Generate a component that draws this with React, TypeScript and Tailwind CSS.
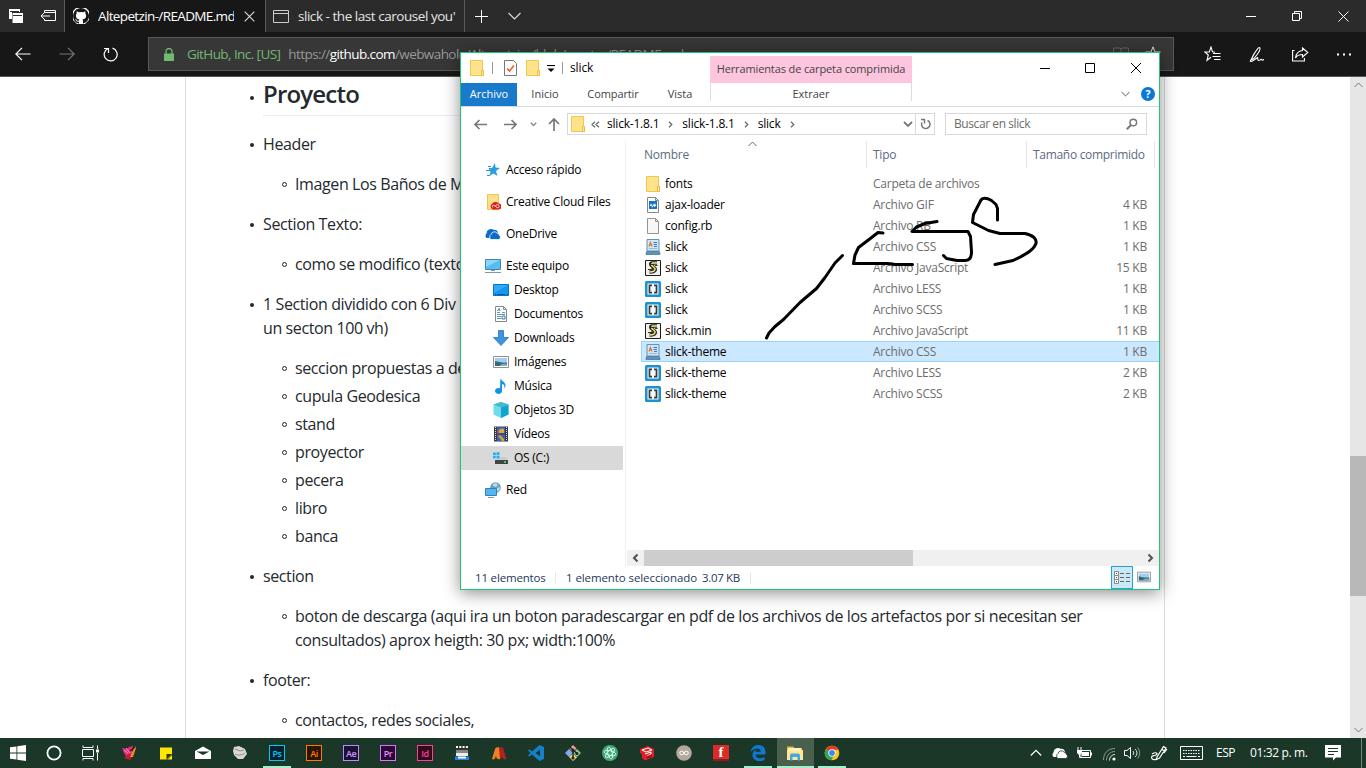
import React from "react";

type SvgProps = { w?: number; h?: number; vb?: string; className?: string; children: React.ReactNode };

function Svg({ w = 16, h = 16, vb, className = "", children }: SvgProps) {
  return (
    <svg width={w} height={h} viewBox={vb ?? `0 0 ${w} ${h}`} fill="none" className={`shrink-0 ${className}`}>
      {children}
    </svg>
  );
}

/* ---------- browser ---------- */

function TabBar() {
  return (
    <div className="flex h-8 shrink-0 bg-[#2b2b2b] text-[13.5px] text-white">
      <div className="flex w-16 items-center gap-[17px] pl-[9px]">
        <Svg w={14} h={14}>
          <path d="M0 0H11V3H3V10H0Z" fill="#fff" />
          <path d="M1 2.5H10" stroke="#2b2b2b" />
          <path d="M3.5 4H14V14H3.5Z" fill="#fff" />
          <path d="M4 6.5H13" stroke="#2b2b2b" />
        </Svg>
        <Svg w={16} h={12}>
          <path d="M4.5 3V.5H15.5V10.5H4.5V9M4.5 2.5H15M10 6H1M4 3L1 6L4 9" stroke="#fff" />
        </Svg>
      </div>
      <div className="flex w-[201px] items-center border-l border-[#5a5a5a] bg-[#171717] pl-2">
        <Svg>
          <rect width="16" height="16" fill="#fff" />
          <path
            fill="#171717"
            d="M8 0C3.6 0 .1 3.6.1 8c0 3.500 2.300 6.500 5.400 7.600.4.100.5-.2.5-.4v-1.500c-2.200.5-2.700-.9-2.700-.9-.4-.9-.9-1.200-.9-1.200-.7-.5.1-.5.1-.5.8.1 1.200.8 1.200.8.7 1.200 1.900.9 2.300.7.1-.5.3-.9.5-1.100-1.800-.2-3.600-.9-3.600-3.900 0-.9.3-1.600.8-2.100-.1-.2-.4-1 .1-2.100 0 0 .7-.2 2.200.8a7.500 7.500 0 0 1 4 0c1.500-1 2.200-.8 2.200-.8.4 1.100.2 1.900.1 2.100.5.6.8 1.300.8 2.100 0 3.100-1.900 3.700-3.700 3.900.3.300.6.8.6 1.500v2.200c0 .2.100.5.5.4A8 8 0 0 0 8 0Z"
          />
          <path fill="#171717" d="M0 0H3L0 3ZM16 0V3L13 0ZM0 16V12L4 16ZM16 16H12L16 12Z" />
        </Svg>
        <div className="ml-[9px] w-[136px] overflow-hidden whitespace-nowrap tracking-[-0.047em]">Altepetzin-/README.md</div>
        <Svg w={11} h={11} className="ml-[10px]">
          <path d="M.7.7L10.300 10.300M10.300.7L.7 10.300" stroke="#ddd" strokeWidth="1.100" />
        </Svg>
      </div>
      <div className="flex w-[200px] items-center border-x border-[#5a5a5a] pl-[7px] text-[#e6e6e6]">
        <Svg w={16} h={13}>
          <path d="M.5.5H15.500V12.500H.5ZM.5 3.500H15.500" stroke="#ccc" />
        </Svg>
        <div className="ml-[9px] w-[160px] overflow-hidden whitespace-nowrap tracking-[-0.034em]">slick - the last carousel you'</div>
      </div>
      <div className="flex flex-1 items-center pl-[10px]">
        <Svg w={13} h={13}>
          <path d="M0 6.500H13M6.500 0V13" stroke="#fff" />
        </Svg>
        <Svg w={13} h={8} className="ml-5">
          <path d="M.5 1L6.500 7L12.500 1" stroke="#ddd" strokeWidth="1.100" />
        </Svg>
      </div>
      <div className="flex w-[138px] items-center">
        <div className="flex w-[46px] justify-center">
          <Svg w={10} h={10}><path d="M0 5.500H10" stroke="#fff" /></Svg>
        </div>
        <div className="flex w-[46px] justify-center">
          <Svg w={10} h={10}><path d="M.5 2.500H7.500V9.500H.5ZM2.500 2V.5H9.500V7.500H8" stroke="#fff" /></Svg>
        </div>
        <div className="flex w-[46px] justify-center">
          <Svg w={11} h={11}><path d="M.5.5L10.500 10.500M10.500.5L.5 10.500" stroke="#fff" /></Svg>
        </div>
      </div>
    </div>
  );
}

function NavBar() {
  return (
    <div className="flex h-[45px] shrink-0 items-start border-b border-[#5b5558] bg-[#171717] text-[13.5px]">
      <div className="flex h-[44px] w-[148px] items-center pl-[15px]">
        <Svg w={16} h={14}>
          <path d="M.8 7H15.500M7 .8L.8 7L7 13.200" stroke="#fff" strokeWidth="1.200" />
        </Svg>
        <Svg w={16} h={14} className="ml-7">
          <path d="M.5 7H15.200M9 .8L15.200 7L9 13.200" stroke="#777" strokeWidth="1.100" />
        </Svg>
        <Svg w={16} h={15} className="ml-7">
          <path d="M5 1.500A6.500 6.500 0 1 0 9.500 1.200M1 1.500H5.500V6" stroke="#fff" strokeWidth="1.200" />
        </Svg>
      </div>
      <div className="mt-[5px] flex h-[34px] w-[1026px] items-center border border-[#595959] bg-[#373737] pl-[15px] whitespace-nowrap">
        <Svg w={10} h={13}>
          <path d="M0 5.500H10V13H0Z" fill="#72b972" />
          <path d="M2 6V3.500A3 3 0 0 1 8 3.500V6" stroke="#72b972" strokeWidth="1.300" />
        </Svg>
        <span className="ml-[13px] tracking-[-0.043em] text-[#72b972]">GitHub, Inc. [US]</span>
        <span className="ml-[8px] tracking-[-0.043em] text-[#999]">
          https://<span className="text-white">github.com</span>/webwahole/Altepetzin-/blob/master/README.md
        </span>
        <Svg w={16} h={14} className="ml-auto">
          <path d="M.5 1H7L8 2L9 1H15.500V13H.5ZM8 2V13" stroke="#666" />
        </Svg>
        <Svg w={16} h={16} className="mr-3 ml-4">
          <path d="M8 .8L10 6H15.300L11 9.500L12.500 15L8 11.500L3.500 15L5 9.500L.7 6H6Z" stroke="#ddd" />
        </Svg>
      </div>
      <div className="flex h-[44px] flex-1 items-center pl-[30px]">
        <Svg w={17} h={16}>
          <path d="M11 6.300L8.500 5.800L7 1L5.300 6H.8L4.300 9L3 14.300L7 11.200" stroke="#fff" strokeWidth="1.100" />
          <path d="M9 7.500H16.500M8.500 10.500H16.500M10 13.500H16.500" stroke="#fff" />
        </Svg>
        <Svg w={16} h={17} className="ml-7">
          <path d="M1 15.500C5 9 8 1 10.500 1.500C13 3 6 12 3.500 13.500C1.500 14 4.500 8 8.500 3M1.500 15.500C4 15.500 7 12.500 8.500 11.500C9.500 12 8 14 9.500 14.500C11 14.500 11.500 13 12.500 13.500C13 14.500 14 14 15 13.500" stroke="#fff" strokeWidth="1.100" />
        </Svg>
        <Svg w={17} h={15} className="ml-[27px]">
          <path d="M2.500 3.500H.6V14H12.400V11" stroke="#fff" strokeWidth="1.100" />
          <path d="M10.500 1L15.800 5.500L10.500 10V7.500C7 7.500 5 8.500 3.500 11C4 6.500 6.500 4 10.500 3.500Z" stroke="#fff" strokeWidth="1.100" />
        </Svg>
        <Svg w={15} h={3} className="ml-7">
          <path d="M0 .5H2V2.500H0ZM6 .5H8V2.500H6ZM12 .5H14V2.500H12Z" fill="#fff" />
        </Svg>
      </div>
    </div>
  );
}

const outline: { text: string; sub?: boolean; tight?: boolean; more?: string }[] = [
  { text: "Header" },
  { text: "Imagen Los Baños de M", sub: true },
  { text: "Section Texto:" },
  { text: "como se modifico (texto", sub: true },
  { text: "1 Section dividido con 6 Div", more: "un secton 100 vh)" },
  { text: "seccion propuestas a de", sub: true },
  { text: "cupula Geodesica", sub: true, tight: true },
  { text: "stand", sub: true, tight: true },
  { text: "proyector", sub: true, tight: true },
  { text: "pecera", sub: true, tight: true },
  { text: "libro", sub: true, tight: true },
  { text: "banca", sub: true, tight: true },
  { text: "section" },
  {
    text: "boton de descarga (aqui ira un boton paradescargar en pdf de los archivos de los artefactos por si necesitan ser",
    sub: true,
    more: "consultados) aprox heigth: 30 px; width:100%",
  },
  { text: "footer:" },
  { text: "contactos, redes sociales,", sub: true },
];

function ReadmePage() {
  return (
    <div className="flex min-h-0 flex-1 overflow-hidden bg-white">
      <div className="ml-[185px] w-[980px] border-x border-[#ddd] pl-[63px] text-base tracking-[-0.0245em] text-[#24292e]">
        <div className="flex">
          <span className="mt-[19px] mr-[9px] ml-[1px] h-1 w-1 rounded-full bg-[#24292e]" />
          <h2 className="h-[39px] w-[852px] border-b border-[#eaecef] text-2xl leading-[34px] font-semibold tracking-[-0.034em]">Proyecto</h2>
        </div>
        {outline.map((o) => (
          <div key={o.text} className={`flex whitespace-nowrap ${o.tight ? "mt-1" : "mt-4"} ${o.sub ? "pl-8" : ""}`}>
            {o.sub ? (
              <span className="mt-[10px] mr-[8px] ml-[1px] h-[5px] w-[5px] shrink-0 rounded-full border border-[#24292e]" />
            ) : (
              <span className="mt-[11px] mr-[9px] ml-[1px] h-1 w-1 shrink-0 rounded-full bg-[#24292e]" />
            )}
            <div className="leading-6">
              <div>{o.text}</div>
              {o.more && <div>{o.more}</div>}
            </div>
          </div>
        ))}
      </div>
      <div className="ml-auto flex w-4 flex-col items-center bg-[#e6e6e6]">
        <Svg w={9} h={6} className="mt-[5px]"><path d="M.5 5L4.500 1L8.500 5" stroke="#777" /></Svg>
        <div className="mt-[368px] h-[140px] w-4 bg-[#b8b8b8]" />
        <Svg w={9} h={6} className="mt-auto mb-[5px]"><path d="M.5 1L4.500 5L8.500 1" stroke="#777" /></Svg>
      </div>
    </div>
  );
}

/* ---------- explorer icons ---------- */

const Folder = ({ className = "" }: { className?: string }) => (
  <Svg w={14} h={16} className={className}>
    <path d="M.5.5H12.500V10L13.500 11V15.500H.5Z" fill="#ffe28c" stroke="#f0c850" />
    <path d="M11.500 10.500H13.500V15.500H11.500Z" fill="#ffe9a8" stroke="#e8bd45" />
  </Svg>
);

const StarIcon = () => (
  <Svg>
    <path d="M10 1L10.500 5.500L15 6L11 9L12.500 14L8.500 11.500L4.500 14L5.500 10L3.500 6L7 6Z" fill="#2a9fe0" />
    <path d="M3 4.500H6M1 8.500H5M2 13.500H5" stroke="#2f93cf" />
  </Svg>
);
const CloudFiles = () => (
  <Svg>
    <path d="M2.500.5H13.500V15.500H2.500Z" fill="#ffe08a" stroke="#edc552" />
    <path d="M8 15.500A3 3 0 0 1 7 10A4 4 0 0 1 13.500 9.500A3 3 0 0 1 13.500 15.500Z" fill="#da1f1a" />
    <path d="M8 13.500C6.500 12 8 10.500 9.500 11.500L12 13.500C14 14.500 15 12 13.500 11C12 10 10.500 11.500 10 12.500" stroke="#fff" strokeWidth=".8" />
  </Svg>
);
const OneDrive = ({ color = "#0b6cc9", gap = "#fff" }: { color?: string; gap?: string }) => (
  <Svg>
    <path d="M1.500 12A3 3 0 0 1 1.500 7.500A4.500 4.500 0 0 1 8.500 3.800A4 4 0 0 1 13 7L8 12Z" fill={color} />
    <path d="M6 13.500A3 3 0 0 1 6 8.500A3.500 3.500 0 0 1 12 7A3.200 3.200 0 0 1 14.500 9.500A2.300 2.300 0 0 1 14 13.500Z" fill={color} stroke={gap} strokeWidth=".8" />
  </Svg>
);
const Computer = () => (
  <Svg>
    <path d="M.5 1.500H15.500V11.500H.5Z" fill="#54bef3" stroke="#4684a8" />
    <path d="M1 2H15L1 9Z" fill="#8bd6fa" />
    <path d="M6 12.500H10M0 14.500H16" stroke="#8197a5" />
  </Svg>
);
const DesktopIcon = () => (
  <Svg>
    <path d="M.5 2.500H15.500V13.500H.5Z" fill="#1197f1" stroke="#0873c0" />
    <path d="M1 3H15L1 11Z" fill="#30aafa" />
    <path d="M2 12.500H3M4 12.500H12M14 12.500H15" stroke="#0a4f86" />
  </Svg>
);
const DocIcon = () => (
  <Svg>
    <path d="M2.500.5H10.500L13.500 3.500V15.500H2.500Z" fill="#fff" stroke="#8a8a8a" />
    <path d="M10.500.5V3.500H13.500" stroke="#8a8a8a" />
    <path d="M4 6.500H7M9 6.500H12M4 8.500H12M4 10.500H8M4 12.500H8" stroke="#5f9bc4" />
    <path d="M4.500 5L6 2.500L7 5M9 10H12V13H9Z" stroke="#3a7fb2" />
  </Svg>
);
const DownIcon = () => (
  <Svg><path d="M5.500.5H10.500V7.500H15.500L8 15.500L.5 7.500H5.500Z" fill="#3d96dd" stroke="#2476bd" strokeWidth=".8" /></Svg>
);
const PicIcon = ({ w = 16 }: { w?: number }) => (
  <Svg w={w} h={w} vb="0 0 16 16">
    <path d="M.5 2.500H15.500V13.500H.5Z" fill="#fff" stroke="#8e8e8e" />
    <path d="M2 4H14V12H2Z" fill="#9fcdf3" />
    <path d="M2 7C5 8 10 9 14 8.500V12H2Z" fill="#356a72" />
    <path d="M7 11C9 10 12 9.500 14 10V12H7Z" fill="#7eaec2" />
  </Svg>
);
const MusicIcon = () => (
  <Svg>
    <path d="M7.500 0C8 3 13 4 12.500 8C12 9.500 11.500 10 11 10.500C12 7.500 11 6.500 9 6V12.500A3.500 3 0 1 1 7 10.200Z" fill="#1094e8" />
  </Svg>
);
const CubeIcon = () => (
  <Svg>
    <path d="M8 0L15.500 2.500V12.500L8 16L.5 12.500V2.500Z" fill="#6fdcec" />
    <path d="M8 0L15.500 2.500L8 5.500L.5 2.500Z" fill="#47b9cc" />
    <path d="M8 5.500L15.500 2.500V12.500L8 16Z" fill="#12a3d0" />
  </Svg>
);
const FilmIcon = () => (
  <Svg>
    <path d="M1 .5H15V15.500H1Z" fill="#3b3b3b" />
    <path d="M2.500 1V15M13.500 1V15" stroke="#ddd" strokeDasharray="1 1" />
    <path d="M4 1H12V7.500H4ZM4 8.500H12V15H4Z" fill="#3562c4" />
    <path d="M5 5L8 2.500L11 3V7H6Z" fill="#e0aa38" />
    <path d="M5 10L7 9L11 13V15H9Z" fill="#dca22c" />
    <path d="M4 5H6V7.500H4Z" fill="#c04677" />
  </Svg>
);
const DriveIcon = () => (
  <Svg>
    <path d="M0 2.500H2.800V5H0ZM3.500 2.200H6.500V5H3.500ZM0 5.800H2.800V8.300H0ZM3.500 5.800H6.500V8.500H3.500Z" fill="#19b5f1" />
    <path d="M7 7H13L14.500 10H2L3 9H7Z" fill="#cacaca" />
    <path d="M2 10H15V14H2Z" fill="#444" />
    <path d="M11 12H13" stroke="#3f4" strokeWidth="1.500" />
  </Svg>
);
const NetIcon = () => (
  <Svg>
    <circle cx="10.500" cy="5.500" r="5.300" fill="#6d9eb8" />
    <path d="M8 2L11 1L13 3L11 5L8 4ZM12 6L15 5L14 9L12 9Z" fill="#b9dceb" />
    <path d="M.5 6.500H11.500V13.500H.5Z" fill="#4fb8f2" stroke="#3581b5" />
    <path d="M3 15.500H9" stroke="#7f97a5" />
  </Svg>
);

const GifFile = () => (
  <Svg>
    <path d="M2.500.5H10.500L13.500 3.500V15.500H2.500Z" fill="#fff" stroke="#888" />
    <path d="M10.500.5V3.500H13.500" stroke="#888" />
    <path d="M4 4H12V12H4Z" fill="#1174c8" />
    <path d="M5 5V8L6 6.500L7.500 9L9 6.500L10.500 8L11 5.500V8.500L9.500 10L8.500 8.500L7.500 10.500L6 8.500L5 9Z" fill="#fff" />
  </Svg>
);
const BlankFile = () => (
  <Svg>
    <path d="M2.500.5H10.500L13.500 3.500V15.500H2.500Z" fill="#f7f7f7" stroke="#949494" />
    <path d="M10.500.5V3.500H13.500" stroke="#949494" />
  </Svg>
);
const CssFile = () => (
  <Svg>
    <path d="M2 .5H14V13H2Z" fill="#cfe6f7" stroke="#5e93ba" />
    <path d="M2.500 12H13.500L15 14V15.500H1V14Z" fill="#5f93bb" stroke="#3f7097" strokeWidth=".7" />
    <path d="M4 7.500L5.500 3.500L7 7.500M4.500 6H6.500" stroke="#e0762c" strokeWidth="1.200" />
    <path d="M8.500 3.500H12M8.500 5.500H12M9 7.500H12" stroke="#3a78d0" />
    <path d="M4 9.500H12" stroke="#9fb9cc" />
  </Svg>
);
const JsFile = () => (
  <Svg>
    <path d="M.5.500H15.500V15.500H.5Z" fill="#f0f0ec" stroke="#1c1c1c" />
    <path d="M12 3H7C5 3.500 5.500 5.500 7.500 6.500L10 8.500C11 10.500 9 12 4.500 12" stroke="#222" strokeWidth="3.400" />
    <path d="M12 3H7.500C6 4 6.500 5.500 8 6.500L10 8.500C10.500 11 8.500 12 4.500 12" stroke="#f3eb7d" strokeWidth="1.500" />
    <path d="M10 5.500H12.500M6.500 8.500H9M3 9.500H8M6 4.500H9" stroke="#333" />
  </Svg>
);
const BracketFile = () => (
  <Svg>
    <rect width="16" height="16" rx="1.500" fill="#1c92d2" />
    <path d="M2.500 2.500H13.500V13.500H2.500Z" fill="#f5f8fa" />
    <path d="M7 4.300H4.500V11.700H7M9 4.300H11.500V11.700H9" stroke="#3a3a3a" strokeWidth="1.700" />
  </Svg>
);

/* ---------- explorer window ---------- */

function TitleAndRibbon() {
  return (
    <div className="flex h-[54px] shrink-0 border-b border-[#d9dadb] text-[11px] whitespace-nowrap">
      <div className="flex w-[249px] flex-col">
        <div className="flex h-[30px] items-center pl-[10px] text-xs">
          <Folder className="-ml-px" />
          <div className="ml-[8px] h-3 w-px bg-[#999]" />
          <Svg w={13} h={16} className="ml-[11px]">
            <path d="M.5.500H9.500L12.500 3.500V15.500H.5Z" fill="#fff" stroke="#777" />
            <path d="M3 8.500L5.500 11L10 5.500" stroke="#e8622c" strokeWidth="1.600" />
          </Svg>
          <Folder className="ml-[9px]" />
          <Svg w={8} h={8} className="mt-[2px] ml-[7px]"><path d="M0 .5H8" stroke="#000" strokeWidth="1.200" /><path d="M.5 3.500H7.500L4 7Z" fill="#000" /></Svg>
          <div className="ml-[7px] h-3 w-px bg-[#999]" />
          <span className="ml-[7px] tracking-[-0.01em] text-black">slick</span>
        </div>
        <div className="flex h-[23px] items-center text-[#444]">
          <div className="flex h-[23px] w-14 items-center justify-center bg-[#1979ca] text-white">Archivo</div>
          <div className="flex w-[56px] justify-center">Inicio</div>
          <div className="flex w-[80px] justify-center tracking-[-0.01em]">Compartir</div>
          <div className="flex w-[54px] justify-center">Vista</div>
        </div>
      </div>
      <div className="flex w-[202px] flex-col pt-[3px] text-[#444]">
        <div className="flex h-[27px] items-center justify-center bg-[#fdc5de] tracking-[-0.011em]">Herramientas de carpeta comprimida</div>
        <div className="flex h-[18px] items-center justify-center border-x border-[#ddd] pt-[5px]">Extraer</div>
      </div>
      <div className="flex flex-1 flex-col">
        <div className="flex h-[30px] items-center justify-end">
          <div className="flex w-[46px] justify-center"><Svg w={10} h={10}><path d="M0 5.500H10" stroke="#000" /></Svg></div>
          <div className="flex w-[45px] justify-center"><Svg w={10} h={10} className="-ml-px"><path d="M.5.5H9.500V9.500H.5Z" stroke="#000" /></Svg></div>
          <div className="flex w-[46px] justify-center"><Svg w={10} h={10}><path d="M0 0L10 10M10 0L0 10" stroke="#000" /></Svg></div>
        </div>
        <div className="flex h-[22px] items-center justify-end gap-[11px] pr-1">
          <Svg w={9} h={6}><path d="M.5.800L4.500 4.800L8.500.8" stroke="#999" strokeWidth="1.200" /></Svg>
          <div className="flex h-[14px] w-[14px] items-center justify-center rounded-full bg-[#0b78d8] text-[10.5px] font-bold text-white">?</div>
        </div>
      </div>
    </div>
  );
}

const Crumb = () => (
  <Svg w={5} h={7} className="mx-[9px]"><path d="M1 .8L3.800 3.500L1 6.200" stroke="#666" strokeWidth="1.200" /></Svg>
);

function AddressRow() {
  return (
    <div className="flex h-[34px] shrink-0 items-center pl-[13px] text-xs whitespace-nowrap">
      <Svg w={13} h={11}><path d="M1 5.500H13M5.500 1L1 5.500L5.500 10" stroke="#777" strokeWidth="1.600" /></Svg>
      <Svg w={13} h={11} className="ml-[17px]"><path d="M0 5.500H12M7.500 1L12 5.500L7.500 10" stroke="#777" strokeWidth="1.600" /></Svg>
      <Svg w={7} h={5} className="ml-[13px]"><path d="M.8.8L3.500 3.500L6.200.8" stroke="#888" strokeWidth="1.400" /></Svg>
      <Svg w={12} h={13} className="ml-[11px]"><path d="M6 13V1M1 6L6 1L11 6" stroke="#777" strokeWidth="1.700" /></Svg>
      <div className="ml-[7px] flex h-[22px] w-[368px] items-center border border-[#d9d9d9] pl-[3px] tracking-[-0.017em] text-black">
        <Folder />
        <Svg w={9} h={7} className="mx-[6px]"><path d="M4 .8L1 3.500L4 6.200M8 .8L5 3.500L8 6.200" stroke="#666" strokeWidth="1.200" /></Svg>
        <span className="ml-[1px]">slick-1.8.1</span>
        <Crumb />
        <span>slick-1.8.1</span>
        <Crumb />
        <span>slick</span>
        <Crumb />
        <Svg w={10} h={7} className="mr-[2px] ml-auto"><path d="M1 1L5 5L9 1" stroke="#777" strokeWidth="1.800" /></Svg>
        <div className="flex h-[20px] w-[19px] items-center justify-center border-l border-[#d9d9d9]">
          <Svg w={11} h={12}><path d="M7.500 2.500A4.200 4.200 0 1 1 2 4.500M1 1.500H4.500V5.500" stroke="#777" strokeWidth="1.500" /></Svg>
        </div>
      </div>
      <div className="ml-[10px] flex h-[22px] w-[202px] items-center justify-between border border-[#d9d9d9] pr-2 pl-2 text-[#6d6d6d]">
        <span className="tracking-[-0.035em]">Buscar en slick</span>
        <Svg w={12} h={12}><circle cx="7.300" cy="4.500" r="3.300" stroke="#777" strokeWidth="1.500" /><path d="M5 7L.8 11.200" stroke="#777" strokeWidth="2" /></Svg>
      </div>
    </div>
  );
}

const places: { label: string; icon: React.ReactNode; sub?: boolean; gap?: boolean; active?: boolean }[] = [
  { label: "Acceso rápido", icon: <StarIcon /> },
  { label: "Creative Cloud Files", icon: <CloudFiles />, gap: true },
  { label: "OneDrive", icon: <OneDrive />, gap: true },
  { label: "Este equipo", icon: <Computer />, gap: true },
  { label: "Desktop", icon: <DesktopIcon />, sub: true },
  { label: "Documentos", icon: <DocIcon />, sub: true },
  { label: "Downloads", icon: <DownIcon />, sub: true },
  { label: "Imágenes", icon: <PicIcon />, sub: true },
  { label: "Música", icon: <MusicIcon />, sub: true },
  { label: "Objetos 3D", icon: <CubeIcon />, sub: true },
  { label: "Vídeos", icon: <FilmIcon />, sub: true },
  { label: "OS (C:)", icon: <DriveIcon />, sub: true, active: true },
  { label: "Red", icon: <NetIcon />, gap: true },
];

const files: { name: string; type: string; size: string; icon: React.ReactNode; selected?: boolean }[] = [
  { name: "fonts", type: "Carpeta de archivos", size: "", icon: <Folder className="mx-[1px]" /> },
  { name: "ajax-loader", type: "Archivo GIF", size: "4 KB", icon: <GifFile /> },
  { name: "config.rb", type: "Archivo RB", size: "1 KB", icon: <BlankFile /> },
  { name: "slick", type: "Archivo CSS", size: "1 KB", icon: <CssFile /> },
  { name: "slick", type: "Archivo JavaScript", size: "15 KB", icon: <JsFile /> },
  { name: "slick", type: "Archivo LESS", size: "1 KB", icon: <BracketFile /> },
  { name: "slick", type: "Archivo SCSS", size: "1 KB", icon: <BracketFile /> },
  { name: "slick.min", type: "Archivo JavaScript", size: "11 KB", icon: <JsFile /> },
  { name: "slick-theme", type: "Archivo CSS", size: "1 KB", icon: <CssFile />, selected: true },
  { name: "slick-theme", type: "Archivo LESS", size: "2 KB", icon: <BracketFile /> },
  { name: "slick-theme", type: "Archivo SCSS", size: "2 KB", icon: <BracketFile /> },
];

function FileList() {
  return (
    <div className="flex flex-1 flex-col">
      <div className="flex h-[27px] text-[#5b6b83]">
        <div className="relative flex w-[241px] items-center border-r border-[#e5e5e5] pl-[18px]">
          Nombre
          <Svg w={9} h={6} className="absolute top-0 left-[122px]"><path d="M.5 5L4.500 1L8.500 5" stroke="#666" /></Svg>
        </div>
        <div className="flex w-40 items-center border-r border-[#e5e5e5] pl-[6px]">Tipo</div>
        <div className="flex w-32 items-center border-r border-[#e5e5e5] pl-[6px] tracking-[-0.025em] whitespace-nowrap">Tamaño comprimido</div>
      </div>
      <div className="mt-[5px] ml-[15px] flex flex-col">
        {files.map((f) => (
          <div
            key={f.name + f.type}
            className={`flex h-[21px] items-center border-y pl-[3px] ${f.selected ? "border-l border-[#99d1ff] bg-[#cce8ff]" : "border-l border-transparent"}`}
          >
            {f.icon}
            <div className="ml-1 w-[208px] text-black">{f.name}</div>
            <div className="w-[180px] text-[#6d6d6d]">{f.type}</div>
            <div className="w-[94px] text-right text-[#6d6d6d]">{f.size}</div>
          </div>
        ))}
      </div>
      <div className="mt-auto ml-px flex h-4 items-center bg-[#f0f0f0]">
        <Svg w={17} h={16}><path d="M10.500 4.500L7 8L10.500 11.500" stroke="#505050" strokeWidth="2" /></Svg>
        <div className="h-4 w-[269px] bg-[#cdcdcd]" />
        <Svg w={17} h={16} className="ml-auto"><path d="M6.500 4.500L10 8L6.500 11.500" stroke="#505050" strokeWidth="2" /></Svg>
      </div>
    </div>
  );
}

function StatusBar() {
  return (
    <div className="flex h-[23px] shrink-0 items-center pl-[14px] text-[11.5px] tracking-[-0.015em] whitespace-nowrap text-[#1e395b]">
      <span className="w-20">11 elementos</span>
      <div className="h-3 w-px bg-[#e8e8e8]" />
      <span className="ml-[10px] w-[131px] tracking-[-0.008em]">1 elemento seleccionado</span>
      <span className="ml-[5px] w-[38px] tracking-[-0.03em]">3.07 KB</span>
      <div className="ml-[10px] h-3 w-px bg-[#e8e8e8]" />
      <div className="ml-auto flex h-[23px] w-[22px] items-center justify-center border border-[#26a0da] bg-[#cbe8f6]">
        <Svg w={16} h={13}>
          <path d="M.5.5H4.500V12.500H.5ZM.5 4.500H4.500M.5 8.500H4.500" fill="#fff" stroke="#888" />
          <path d="M6 2.500H10M12 2.500H16M6 6.500H10M12 6.500H16M6 10.500H10M12 10.500H16" stroke="#666" />
          <path d="M2 2.500H3M2 6.500H3M2 10.500H3" stroke="#444" />
        </Svg>
      </div>
      <div className="mr-2 mb-[2px] ml-1"><PicIcon w={14} /></div>
    </div>
  );
}

function Explorer() {
  return (
    <div className="absolute top-[52px] left-[460px] flex h-[538px] w-[700px] flex-col border border-[#20c57a] bg-white text-xs shadow-[0_3px_16px_rgba(0,0,0,0.45)]">
      <TitleAndRibbon />
      <AddressRow />
      <div className="flex min-h-0 flex-1 tracking-[-0.02em]">
        <div className="flex w-[165px] flex-col border-r border-[#f0f0f0] pt-[17px]">
          {places.map((p) => (
            <div
              key={p.label}
              className={`flex h-6 w-[162px] shrink-0 items-center whitespace-nowrap text-black ${p.gap ? "mt-2" : ""} ${p.sub ? "gap-[5px] pl-8" : "gap-[5px] pl-6"} ${p.active ? "bg-[#d9d9d9]" : ""}`}
            >
              {p.icon}
              {p.label}
            </div>
          ))}
        </div>
        <FileList />
      </div>
      <StatusBar />
    </div>
  );
}

function Ink() {
  return (
    <svg width="280" height="150" viewBox="760 193 280 150" fill="none" stroke="#000" strokeWidth="3" strokeLinecap="round" strokeLinejoin="round" className="pointer-events-none absolute top-[193px] left-[760px]">
      <path d="M842.500 255.500L835 263L825 277.500L816.500 288.500L800 302.500L783.500 319.500L775 326.500L769 333L766.500 338" />
      <path d="M883 233L878 232.500L869 239.500L858.500 247.500L855 255L853.500 263.500H888L895 264.500H912.500" />
      <path d="M937 221.500L925 223.500L916.500 227L912 231.500H968L970.500 236.500L971.500 252C971.500 258 969 260.500 965 260.500H957L946.500 258.500L943.500 255.500" />
      <path d="M997.500 220V208.500L996 204.500L991.500 200.500C987 198 983 197.500 981 200L973.500 214.500L972.500 222.500L988.500 230.500L1000 233.500H1025C1033 235 1037 239 1036 243.500C1034 249 1029 253 1013 260.500L995 264.500" />
    </svg>
  );
}

/* ---------- taskbar ---------- */

const Adobe = ({ label, box }: { label: string; box: string }) => (
  <div className={`flex h-4 w-4 items-center justify-center border text-[9px] leading-none font-semibold tracking-[-0.05em] ${box}`}>{label}</div>
);

const taskIcons: { id: string; icon: React.ReactNode; bar?: boolean; active?: boolean }[] = [
  { id: "bird", icon: <Svg><path d="M1 3L6 4L8 2L12 1L11 6L13 8L9 11L5 11L3 8Z" fill="#e52c83" /><path d="M3 5L8 9M5 3L9 8" stroke="#f48fc0" /><path d="M3 13L8 8L12 11L9 15Z" fill="#c01d2d" /><path d="M9 12L14 1L15 3L12 12Z" fill="#f08c25" /><path d="M9 6L14 2" stroke="#3a1a1a" strokeWidth="1.500" /></Svg> },
  { id: "notes", icon: <Svg><path d="M2 2.500H14V9L9 14.500H2Z" fill="#ffe600" /><path d="M8.500 14.500V9H14Z" fill="#2c3a12" /><path d="M9.500 14.500L14 10V14.500Z" fill="#ffe600" /></Svg> },
  { id: "mail", icon: <Svg><path d="M0 6L8 1.500L16 6V14H0Z" fill="#fff" /><path d="M1.500 6.500H14.500L8 10Z" fill="#1b3728" /></Svg> },
  { id: "rhino", icon: <Svg><path d="M2 2L7 1L13 4L15 9L11 14L6 14L2 10L1 6Z" fill="#d8d8d8" /><path d="M3 4L8 6L12 5M3 9C6 11 10 10 13 8" stroke="#8a8a8a" /></Svg> },
  { id: "ps", icon: <Adobe label="Ps" box="border-[#00c8ff] bg-[#04202d] text-[#00c8ff]" />, bar: true },
  { id: "ai", icon: <Adobe label="Ai" box="border-[#ff7c00] bg-[#2b1400] text-[#ff7c00]" /> },
  { id: "ae", icon: <Adobe label="Ae" box="border-[#b78cff] bg-[#1d1033] text-[#c49bff]" /> },
  { id: "pr", icon: <Adobe label="Pr" box="border-[#e070ff] bg-[#290a33] text-[#e88aff]" /> },
  { id: "id", icon: <Adobe label="Id" box="border-[#ff3f94] bg-[#33091e] text-[#ff3f94]" /> },
  { id: "clap", icon: <Svg><path d="M2 2H14V6H2Z" fill="#333" /><path d="M2 5H14V8H2Z" fill="#888" /><path d="M2 8H14V11H2Z" fill="#eee" /><path d="M2 2H14" stroke="#fff" strokeWidth="2" strokeDasharray="2 1.300" /><path d="M1 11.500H15V15H1Z" fill="#2383e8" /><path d="M4 12.500H12" stroke="#fff" strokeWidth="2" /></Svg> },
  { id: "m", icon: <Svg><path d="M1 14L4 4C5 1.500 9 1.500 9 4V14C6 15 5 12 5 11C4 14 3 15 1 14Z" fill="#ee8222" /><path d="M8 3C10 1.500 12 2 12.500 4L15.500 14C13 15 12 14 11 12L9 14Z" fill="#b1231f" /></Svg> },
  { id: "code", icon: <Svg><path d="M11.500 0L16 2V14L11.500 16L4 9.500L1.500 11.500L0 10.500L2.500 8L0 5.500L1.500 4.500L4 6.500ZM12 4.500L7.500 8L12 11.500Z" fill="#1580cc" fillRule="evenodd" /></Svg> },
  { id: "git", icon: <Svg><path d="M8 0L11.500 3.500L8 7L4.500 3.500Z" fill="#e9a19a" /><path d="M4 4L8 8L4 12L0 8Z" fill="#83a8ec" /><path d="M12 4L16 8L12 12L8 8Z" fill="#8bc98a" /><path d="M8 8.500L12 12.500L8 16L4 12Z" fill="#ead67a" /><path d="M5 2L8 5V13M8 5L12 8.500" stroke="#222" strokeWidth="1.400" /><circle cx="8" cy="13" r="1.600" fill="#222" /><circle cx="12" cy="8.500" r="1.500" fill="#222" /><circle cx="8" cy="5" r="1.500" fill="#222" /></Svg> },
  { id: "atom", icon: <Svg><circle cx="8" cy="8" r="8" fill="#3faa78" /><g stroke="#e9fff4" strokeWidth=".9"><ellipse cx="8" cy="8" rx="6" ry="2.300" transform="rotate(15 8 8)" /><ellipse cx="8" cy="8" rx="6" ry="2.300" transform="rotate(75 8 8)" /><ellipse cx="8" cy="8" rx="6" ry="2.300" transform="rotate(135 8 8)" /></g></Svg> },
  { id: "sketchup", icon: <Svg><path d="M1 4L9 1L15 4V12L6 15.500L3 13V9L1 8Z" fill="#e21f26" /><path d="M3 5L9 3L13 5L7 7ZM6 9L12 7V9L8 11" stroke="#fff" /><path d="M8 11L13 9.500V12L8 14Z" fill="#a40f15" /></Svg> },
  { id: "arduino", icon: <Svg><circle cx="8" cy="8" r="7.800" fill="#b5a79b" /><circle cx="5.700" cy="8" r="1.900" stroke="#fff" /><circle cx="10.300" cy="8" r="1.900" stroke="#fff" /></Svg> },
  { id: "flash", icon: <div className="flex h-4 w-4 items-center justify-center border-b-2 border-[#931b1d] bg-[#d92b27] font-['Liberation_Serif',serif] text-[15px] leading-none font-bold text-white">f</div> },
  { id: "edge", icon: <Svg><path d="M.5 7C1.500 2.500 4.500 0 8.500 0C13 0 15.500 3 15.500 7.500V9.500H5.500C5.500 13.500 11 14 14.500 12V15C9.500 17.500 2 16 2.500 9.500C2.700 7 4.500 5.200 6.500 4.300C5.700 5.200 5.500 6 5.400 6.800H10.800C10.800 2.500 5 2 .5 7Z" fill="#0e78d6" /></Svg>, bar: true },
  { id: "files", icon: <Svg><path d="M0 1.500H6L7.500 3H15V6H0Z" fill="#e6b73c" /><path d="M0 5H16V15H0Z" fill="#ffe694" /><path d="M1 3H14V6H1Z" fill="#fff2b8" /><path d="M3 15.500V10.500C3 9 4 8.500 5 8.500H11C12.500 8.500 13 9.500 13 10.500V15.500H10.500V12H5.500V15.500Z" fill="#41a8e8" /></Svg>, active: true },
  { id: "chrome", icon: <Svg><circle cx="8" cy="8" r="7.300" fill="#fbc816" /><path d="M8 8L1.700 4.300A7.300 7.300 0 0 1 14.500 4.800H8Z" fill="#e23b2e" /><path d="M8 8L1.700 4.300A7.300 7.300 0 0 0 7.300 15.300L10.800 9.500Z" fill="#30a552" /><circle cx="8" cy="8" r="3.700" fill="#fff" /><circle cx="8" cy="8" r="2.900" fill="#4285f4" /></Svg>, bar: true },
];

function Taskbar() {
  return (
    <div className="flex h-[30px] shrink-0 items-center bg-[#1b3728] text-xs whitespace-nowrap text-white">
      <div className="flex w-[110.5px] items-center pl-[10px]">
        <Svg><path d="M0 2.300L6.500 1.400V7.600H0ZM7.300 1.300L16 0V7.600H7.300ZM0 8.400H6.500V14.600L0 13.700ZM7.300 8.400H16V16L7.300 14.700Z" fill="#fff" /></Svg>
        <Svg className="ml-5"><circle cx="8" cy="8" r="6.600" stroke="#fff" strokeWidth="1.800" /></Svg>
        <Svg w={17} h={16} className="ml-5">
          <path d="M1 .5V2.500H11V.5M1 15.500V13.500H11V15.500M.5 4.500H11.500V11.500H.5ZM15.500.5V4M15.500 8V15.500" stroke="#fff" />
          <path d="M14 4.500H17V7.500H14Z" fill="#fff" />
        </Svg>
      </div>
      {taskIcons.map((t) => (
        <div key={t.id} className={`flex h-[30px] w-[37px] flex-col items-center justify-between pt-[7px] ${t.active ? "bg-[#49604f]" : ""}`}>
          {t.icon}
          <div className={`h-[2px] ${t.active ? "w-[37px] bg-[#a3eecb]" : t.bar ? "w-7 bg-[#a3eecb]" : "w-7"}`} />
        </div>
      ))}
      <div className="ml-auto flex h-[30px] items-center">
        <Svg w={12} h={8}><path d="M.8 6.500L6 1.300L11.200 6.500" stroke="#fff" strokeWidth="1.200" /></Svg>
        <div className="ml-[10px]"><OneDrive color="#fff" gap="#1b3728" /></div>
        <Svg w={16} h={13} className="ml-2">
          <path d="M5 3.500H14.500V10.500H5Z" stroke="#fff" />
          <path d="M6 5H13V9H6ZM15 5.500H16V8.500H15ZM1 3H6V6L4 8H3L1 6Z" fill="#fff" />
          <path d="M2 0V3M5 0V3M3.500 7V10.500H6" stroke="#fff" />
        </Svg>
        <Svg w={13} h={13} className="mt-[2px] ml-[11px]">
          <g stroke="#8b998f"><path d="M.5 12C.5 5 5 .5 12 .5" /><path d="M3.500 12.500C3.500 7 7 3.500 12 3.500" /></g>
          <path d="M6.500 12.500C6.500 9 9 6.500 12 6.500" stroke="#dde3df" /><circle cx="11" cy="11" r="1.600" fill="#fff" />
        </Svg>
        <Svg w={17} h={14} className="ml-2">
          <path d="M.5 4.500H3L6.500 1.500V12.500L3 9.500H.5Z" stroke="#fff" />
          <path d="M9 5A3 3 0 0 1 9 9M11 3A5 5 0 0 1 11 11" stroke="#ddd" /><path d="M13.500 1.500A8 8 0 0 1 13.500 12.500" stroke="#8b998f" />
        </Svg>
        <Svg w={17} h={16} className="ml-[10px]">
          <path d="M1 9C5 6.500 7.500 8.500 5 10C2 11.500.5 10.500.5 12.500C1 15 4 15 5.500 14M6 12L12.500 1.500L15 3L8.500 13L5.500 14.500ZM11 4.500L13.500 6M13 8L16 4" stroke="#fff" strokeWidth="1.200" />
        </Svg>
        <Svg w={23} h={14} className="ml-[12px]">
          <path d="M.5.5H22.500V13.500H.5Z" stroke="#fff" />
          <path d="M3 4.500H20M3 7.500H20" stroke="#fff" strokeDasharray="1.500 1" /><path d="M3 10.500H5M6.500 10.500H16.500M18 10.500H20" stroke="#fff" />
        </Svg>
        <span className="ml-[13px] w-[34px] tracking-[-0.04em]">ESP</span>
        <span className="w-[75px] tracking-[-0.03em]">01:32 p. m.</span>
        <Svg w={16} h={16}><path d="M0 0H16V12.500H11L8 15.500V12.500H0Z" fill="#fff" /><path d="M3 3.500H13M3 6.500H13M3 9.500H9" stroke="#1b3728" /></Svg>
        <div className="mr-1 ml-5 h-[30px] w-px bg-[#748679]" />
      </div>
    </div>
  );
}

export default function App() {
  return (
    <div className="relative flex h-[768px] w-[1366px] flex-col overflow-hidden bg-white font-['Open_Sans','Noto_Sans',sans-serif]">
      <TabBar />
      <NavBar />
      <ReadmePage />
      <Taskbar />
      <Explorer />
      <Ink />
    </div>
  );
}
